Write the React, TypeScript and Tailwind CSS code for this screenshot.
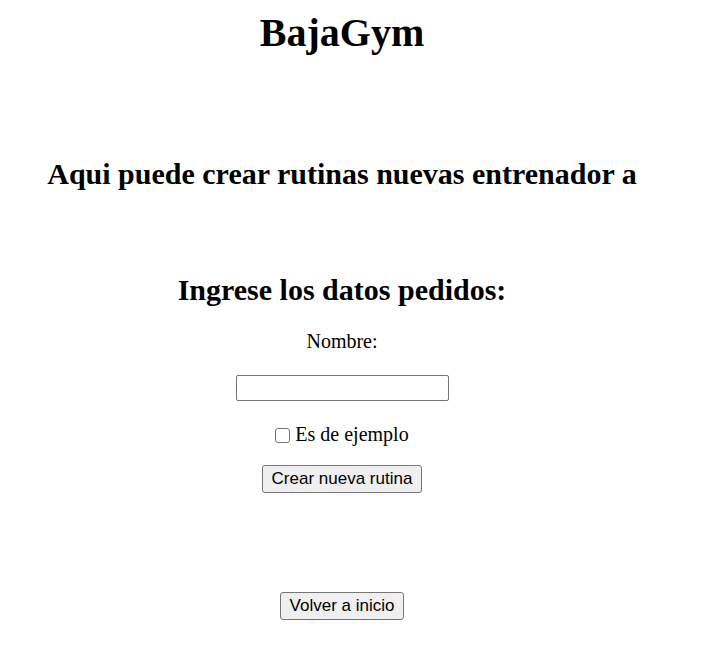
import React from "react";

export default function App() {
  return (
    <div className="w-[713px] min-h-[671px] bg-white text-black" style={{ fontFamily: '"Liberation Serif", "Times New Roman", serif' }}>
      <div className="w-[684px] flex flex-col items-center text-center">
        <h1 className="mt-[10px] text-[40px] font-bold leading-[46px]">BajaGym</h1>
        <h2 className="mt-[101px] text-[30px] font-bold leading-[34px]">Aqui puede crear rutinas nuevas entrenador a</h2>
        <h2 className="mt-[82px] text-[30px] font-bold leading-[34px]">Ingrese los datos pedidos:</h2>
        <label className="mt-[23px] text-[20px] leading-[23px]">Nombre:</label>
        <input
          type="text"
          className="mt-[22px] w-[213px] h-[26px] border border-[#767676] rounded-[2px] bg-white outline-none"
        />
        <div className="mt-[22px] flex items-center text-[20px] leading-[23px]">
          <span className="inline-block shrink-0 w-[15px] h-[15px] border border-[#767676] rounded-[3px] bg-white mr-[5px] mt-[1px]" />
          <span>Es de ejemplo</span>
        </div>
        <button
          className="mt-[19px] h-[28px] px-[9px] bg-[#efefef] border border-[#767676] rounded-[3px] text-[17px] leading-[20px] flex items-center"
          style={{ fontFamily: '"Liberation Sans", Arial, sans-serif' }}
        >
          Crear nueva rutina
        </button>
        <button
          className="mt-[99px] h-[28px] px-[9px] bg-[#efefef] border border-[#767676] rounded-[3px] text-[17px] leading-[20px] flex items-center"
          style={{ fontFamily: '"Liberation Sans", Arial, sans-serif' }}
        >
          Volver a inicio
        </button>
      </div>
    </div>
  );
}
